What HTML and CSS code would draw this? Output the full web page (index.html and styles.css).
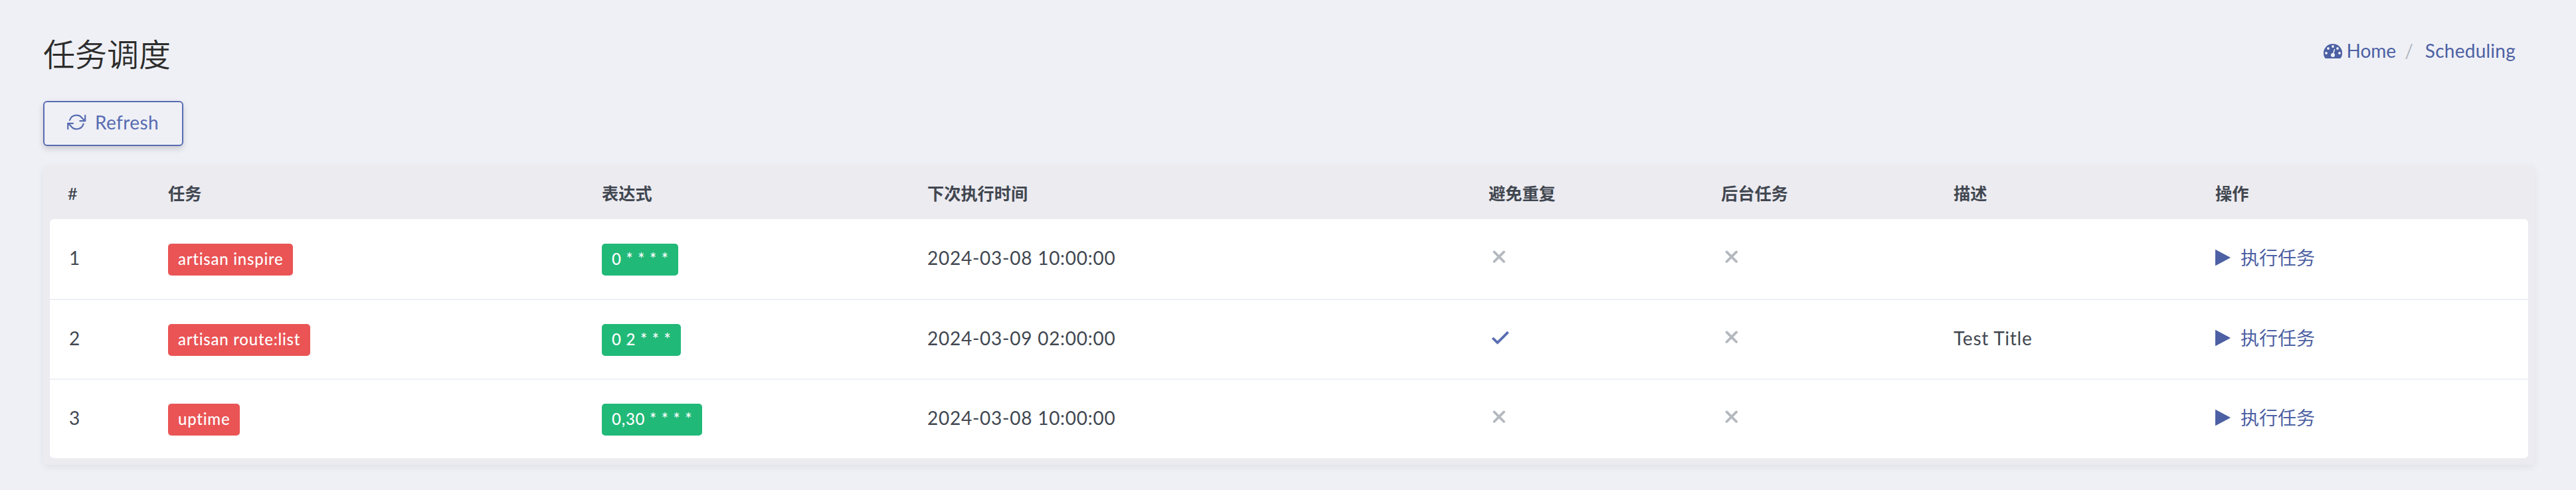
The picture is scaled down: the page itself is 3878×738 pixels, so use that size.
FILE: index.html
```html
<!DOCTYPE html>
<html lang="zh-CN">
<head>
<meta charset="utf-8">
<title>任务调度</title>
<link rel="stylesheet" href="styles.css">
</head>
<body>
<svg class="symbols" aria-hidden="true">
  <symbol id="x" viewBox="0 0 20 22"><path d="M2.4 3.4 17 18M17 3.4 2.4 18" fill="none" stroke="currentColor" stroke-width="3.8" stroke-linecap="round"/></symbol>
  <symbol id="check" viewBox="0 0 28 22"><path d="M2 12 9.4 19.2 25.4 3.2" fill="none" stroke="currentColor" stroke-width="3.8"/></symbol>
  <symbol id="play" viewBox="0 0 24 24"><path d="M0 .4v23.2c0 .4.3.5.6.3L22.2 12.4c.4-.2.4-.6 0-.8L.6.1C.3-.1 0 0 0 .4Z" fill="currentColor"/></symbol>
</svg>
<header class="page-header">
  <h1 class="title">任务调度</h1>
  <nav class="breadcrumb">
    <a class="home" href="#"><svg class="gauge" viewBox="0 0 28 22"><path d="M14 0A14 14 0 0 0 2 21.2c.3.5.7.8 1.2.8h21.6c.5 0 .9-.3 1.2-.8A14 14 0 0 0 14 0Z" fill="currentColor"/><g fill="#eff0f6"><circle cx="4" cy="14" r="1.9"/><circle cx="7" cy="7" r="1.9"/><circle cx="14" cy="4" r="1.9"/><circle cx="21" cy="7" r="1.9"/><circle cx="24" cy="14" r="1.9"/><circle cx="14" cy="17" r="3"/></g><path d="M14 17 16.4 8.6" stroke="#eff0f6" stroke-width="1.6" stroke-linecap="round"/></svg><span class="home-text">Home</span></a>
    <span class="slash">/</span>
    <a class="current" href="#">Scheduling</a>
  </nav>
</header>
<button class="refresh" type="button"><svg class="refresh-icon" viewBox="0 0 29 24" fill="none" stroke="currentColor" stroke-width="2.2" stroke-linecap="round" stroke-linejoin="miter"><path d="M4 9A10.6 10.6 0 0 1 23 6.4L27 10M27.2 1.8V10.2H19.4M24.6 14.6A10.6 10.6 0 0 1 5.4 17.4L1.4 14M1.2 22.2V13.8H9"/></svg><span class="refresh-text">Refresh</span></button>
<main class="card">
  <div class="row head"><span class="index">#</span><span>任务</span><span>表达式</span><span>下次执行时间</span><span>避免重复</span><span>后台任务</span><span>描述</span><span>操作</span></div>
  <div class="body">
    <div class="row"><span class="num">1</span><span><b class="badge red">artisan inspire</b></span><span><b class="badge green">0 * * * *</b></span><span class="date">2024-03-08 10:00:00</span><span><svg class="x"><use href="#x"/></svg></span><span><svg class="x"><use href="#x"/></svg></span><span></span><a class="run" href="#"><svg class="play"><use href="#play"/></svg>执行任务</a></div>
    <div class="row"><span class="num">2</span><span><b class="badge red">artisan route:list</b></span><span><b class="badge green">0 2 * * *</b></span><span class="date">2024-03-09 02:00:00</span><span><svg class="check"><use href="#check"/></svg></span><span><svg class="x"><use href="#x"/></svg></span><span class="desc">Test Title</span><a class="run" href="#"><svg class="play"><use href="#play"/></svg>执行任务</a></div>
    <div class="row"><span class="num">3</span><span><b class="badge red">uptime</b></span><span><b class="badge green">0,30 * * * *</b></span><span class="date">2024-03-08 10:00:00</span><span><svg class="x"><use href="#x"/></svg></span><span><svg class="x"><use href="#x"/></svg></span><span></span><a class="run" href="#"><svg class="play"><use href="#play"/></svg>执行任务</a></div>
  </div>
</main>
</body>
</html>
```
FILE: styles.css
```css
* { box-sizing: border-box; }
body {
  margin: 0;
  height: 738px;
  padding: 0 62px 0 65px;
  background: #eff0f6;
  color: #414750;
  font: 28px/40px Lato, "Noto Sans CJK SC", sans-serif;
  overflow: hidden;
}
.symbols { position: absolute; width: 0; height: 0; }
a { color: #4c60a3; text-decoration: none; }
.page-header { display: flex; justify-content: space-between; height: 152px; }
.title { margin: 47px 0 0; font-size: 48px; line-height: 70px; font-weight: 350; color: #2c2c2c; }
.breadcrumb { display: flex; padding: 56px 29px 0 0; }
.home { display: flex; }
.gauge { width: 28px; height: 22px; margin: 10px 7px 0 0; }
.slash { margin: 0 18px 0 13px; color: #b3b9bf; }
.current { letter-spacing: .25px; }
.refresh {
  display: flex;
  align-items: center;
  width: 211px;
  height: 68px;
  padding: 0 0 5px 34px;
  border: 2px solid #586cb1;
  border-radius: 6px;
  background: #eff0f6;
  box-shadow: 0 4px 10px rgba(0, 0, 0, .16);
  color: #586cb1;
  font: inherit;
}
.refresh-icon { width: 29px; height: 24px; margin-right: 13px; }
.refresh-text { letter-spacing: .4px; }
.card {
  margin-top: 28px;
  height: 452px;
  padding: 0 10px 12px;
  border-radius: 6px;
  background: #ecebf0;
  box-shadow: 0 4px 12px rgba(0, 0, 0, .06);
}
.row {
  display: grid;
  grid-template-columns: 151px 653px 490px 845px 350px 350px 394px 1fr;
  height: 120px;
  padding-left: 27px;
  align-items: start;
}
.row > * { padding-top: 38px; display: flex; }
.head { height: 82px; font-size: 25.2px; font-weight: 600; }
.row.head > * { padding-top: 23px; }
.head .index { font-weight: 500; }
.body { background: #fff; border-radius: 6px; }
.body .row + .row { border-top: 2px solid #edf1f6; }
.body .row + .row > * { padding-top: 37px; }
.body .row > :has(.badge) { padding-top: 37px; }
.body .row + .row > :has(.badge) { padding-top: 36px; }
.num { padding-left: 2px; }
.date, .desc { letter-spacing: .75px; }
.badge { display: block; height: 48px; padding: 0 14.5px 0 15px; border-radius: 5px; color: #fff; font-size: 24px; line-height: 45px; font-weight: 500; letter-spacing: .75px; white-space: pre; }
.red { background: #ea5455; }
.green { background: #21b978; }
.x { width: 20px; height: 22px; margin: 8px 0 0 6px; color: #b3b9bf; }
.check { width: 28px; height: 22px; margin: 8px 0 0 4px; color: #586cb1; }
.play { width: 24px; height: 24px; margin: 8px 14px 0 0; }
```
